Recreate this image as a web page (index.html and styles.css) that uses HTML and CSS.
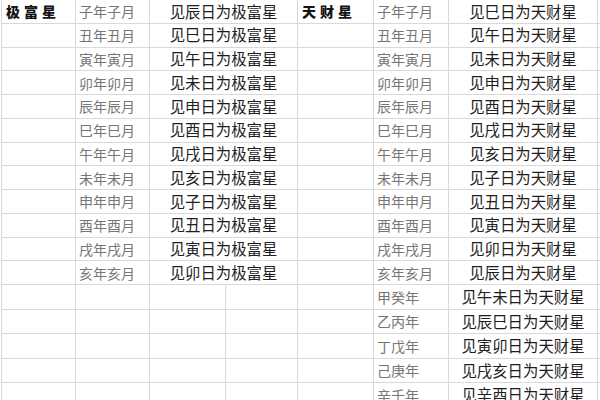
FILE: index.html
```html
<!DOCTYPE html>
<html lang="zh-CN">
<head>
<meta charset="utf-8">
<title>极富星 天财星</title>
<link rel="stylesheet" href="styles.css">
</head>
<body>
<table class="sheet">
  <colgroup>
    <col class="w-c1"><col class="w-c2"><col class="w-c3a"><col class="w-c3b"><col class="w-c4"><col class="w-c5"><col class="w-c6"><col class="w-end">
  </colgroup>
  <tbody>
    <tr class="top"><td class="title">极富星</td><td class="ym">子年子月</td><td class="rule" colspan="2">见辰日为极富星</td><td class="title">天财星</td><td class="ym">子年子月</td><td class="rule">见巳日为天财星</td><td class="end"></td></tr>
    <tr class="top"><td></td><td class="ym">丑年丑月</td><td class="rule" colspan="2">见巳日为极富星</td><td></td><td class="ym">丑年丑月</td><td class="rule">见午日为天财星</td><td class="end"></td></tr>
    <tr class="top"><td></td><td class="ym">寅年寅月</td><td class="rule" colspan="2">见午日为极富星</td><td></td><td class="ym">寅年寅月</td><td class="rule">见未日为天财星</td><td class="end"></td></tr>
    <tr class="top"><td></td><td class="ym">卯年卯月</td><td class="rule" colspan="2">见未日为极富星</td><td></td><td class="ym">卯年卯月</td><td class="rule">见申日为天财星</td><td class="end"></td></tr>
    <tr class="top"><td></td><td class="ym">辰年辰月</td><td class="rule" colspan="2">见申日为极富星</td><td></td><td class="ym">辰年辰月</td><td class="rule">见酉日为天财星</td><td class="end"></td></tr>
    <tr class="top"><td></td><td class="ym">巳年巳月</td><td class="rule" colspan="2">见酉日为极富星</td><td></td><td class="ym">巳年巳月</td><td class="rule">见戌日为天财星</td><td class="end"></td></tr>
    <tr class="top"><td></td><td class="ym">午年午月</td><td class="rule" colspan="2">见戌日为极富星</td><td></td><td class="ym">午年午月</td><td class="rule">见亥日为天财星</td><td class="end"></td></tr>
    <tr class="top"><td></td><td class="ym">未年未月</td><td class="rule" colspan="2">见亥日为极富星</td><td></td><td class="ym">未年未月</td><td class="rule">见子日为天财星</td><td class="end"></td></tr>
    <tr class="top"><td></td><td class="ym">申年申月</td><td class="rule" colspan="2">见子日为极富星</td><td></td><td class="ym">申年申月</td><td class="rule">见丑日为天财星</td><td class="end"></td></tr>
    <tr class="top"><td></td><td class="ym">酉年酉月</td><td class="rule" colspan="2">见丑日为极富星</td><td></td><td class="ym">酉年酉月</td><td class="rule">见寅日为天财星</td><td class="end"></td></tr>
    <tr class="top"><td></td><td class="ym">戌年戌月</td><td class="rule" colspan="2">见寅日为极富星</td><td></td><td class="ym">戌年戌月</td><td class="rule">见卯日为天财星</td><td class="end"></td></tr>
    <tr class="top"><td></td><td class="ym">亥年亥月</td><td class="rule" colspan="2">见卯日为极富星</td><td></td><td class="ym">亥年亥月</td><td class="rule">见辰日为天财星</td><td class="end"></td></tr>
    <tr class="low"><td></td><td></td><td></td><td></td><td></td><td class="ym">甲癸年</td><td class="rule">见午未日为天财星</td><td class="end"></td></tr>
    <tr class="low"><td></td><td></td><td></td><td></td><td></td><td class="ym">乙丙年</td><td class="rule">见辰巳日为天财星</td><td class="end"></td></tr>
    <tr class="low"><td></td><td></td><td></td><td></td><td></td><td class="ym">丁戊年</td><td class="rule">见寅卯日为天财星</td><td class="end"></td></tr>
    <tr class="low"><td></td><td></td><td></td><td></td><td></td><td class="ym">己庚年</td><td class="rule">见戌亥日为天财星</td><td class="end"></td></tr>
    <tr class="low"><td></td><td></td><td></td><td></td><td></td><td class="ym">辛壬年</td><td class="rule">见辛酉日为天财星</td><td class="end"></td></tr>
  </tbody>
</table>
</body>
</html>
```

FILE: styles.css
```css
html, body {
  margin: 0;
  padding: 0;
  background: #ffffff;
  overflow: hidden;
}

.sheet {
  border-collapse: collapse;
  table-layout: fixed;
  width: 603px;
  margin-left: 1px;
  margin-top: -1px;
  font-family: "Noto Sans CJK SC", "Noto Sans", sans-serif;
}

.w-c1 { width: 74px; }
.w-c2 { width: 74px; }
.w-c3a { width: 76px; }
.w-c3b { width: 72px; }
.w-c4 { width: 76px; }
.w-c5 { width: 75px; }
.w-c6 { width: 149px; }
.w-end { width: 7px; }

.sheet td {
  border: 1px solid #d9d9d9;
  padding: 0;
  white-space: nowrap;
  overflow: hidden;
  line-height: 1;
}

.sheet td.end {
  border-right: none;
}

.top td { height: 22.75px; }
.low td { height: 23.5px; }

.title {
  font-size: 14px;
  font-weight: 900;
  color: #141414;
  letter-spacing: 4px;
  padding-left: 4px !important;
}

.ym {
  font-size: 14px;
  color: #767676;
  padding-left: 3px !important;
}

.rule {
  font-size: 15.4px;
  color: #1e1e1e;
  text-align: center;
}
```
